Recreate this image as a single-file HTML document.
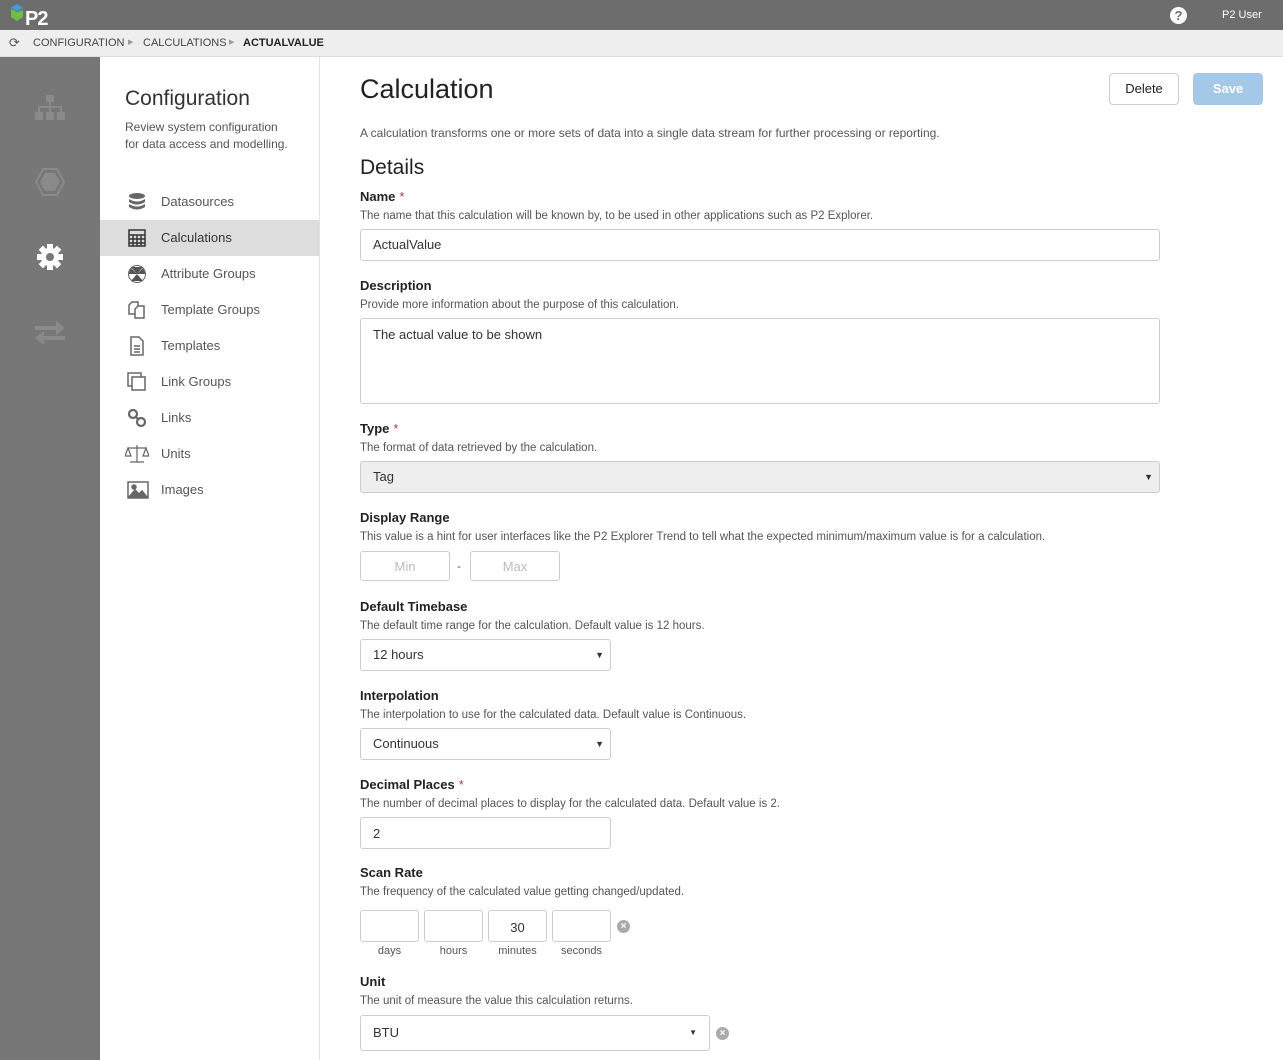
<!DOCTYPE html>
<html><head><meta charset="utf-8"><style>
*{box-sizing:border-box;margin:0;padding:0}
body{width:1283px;height:1060px;position:relative;overflow:hidden;font-family:"Liberation Sans",sans-serif;color:#333;background:#fff;font-size:12px}
.a{position:absolute;white-space:nowrap}
.top{left:0;top:0;width:1283px;height:30px;background:#6d6d6d}
.bc{left:0;top:30px;width:1283px;height:27px;background:#eee;border-bottom:1px solid #ddd;font-size:11px;color:#444;line-height:26px}
.rail{left:0;top:57px;width:100px;height:1003px;background:#777}
.nav{left:100px;top:57px;width:220px;height:1003px;background:#fff;border-right:1px solid #e2e2e2}
.ni{position:absolute;left:0;width:219px;height:36px;line-height:36px;font-size:13px;color:#555;padding-left:61px}
.ni svg{position:absolute;left:27px;top:8px}
.lbl{font-weight:bold;font-size:13px;color:#222;line-height:16px}
.lbl i{font-style:normal;color:#a0405a;font-weight:normal;margin-left:4px}
.hint{font-size:11.5px;color:#555;line-height:14px}
.in{position:absolute;border:1px solid #ccc;border-radius:3px;background:#fff;font-size:13px;color:#333;padding-left:12px;line-height:30px}
.car{position:absolute;right:6px;top:0;font-size:9px;color:#333}
.x{position:absolute;width:13px;height:13px;border-radius:50%;background:#aaa;color:#fff;font-size:10px;line-height:13px;text-align:center;font-weight:bold}
.sl{font-size:11px;color:#555;text-align:center;width:59px}
</style></head><body>
<div class="a top"></div>
<svg class="a" style="left:9px;top:3px" width="44" height="24" viewBox="0 0 44 24">
<polygon points="2,5 8,1 14,5 8,8" fill="#3b9fd8"/><polygon points="2,6 8,9 14,7 14,14 8,18 2,14" fill="#6cbe45"/>
<text x="16" y="22" font-family="Liberation Sans" font-weight="bold" font-size="20" fill="#fff" letter-spacing="-1">P2</text></svg>
<div class="a" style="left:1170px;top:7px;width:17px;height:17px;border-radius:50%;background:#fff;color:#6d6d6d;font-weight:bold;font-size:13px;text-align:center;line-height:17px">?</div>
<div class="a" style="left:1222px;top:9px;font-size:11px;color:#fff">P2 User</div>
<div class="a bc"><span style="position:absolute;left:9px;font-size:13px;color:#555">⟳</span><span style="position:absolute;left:33px">CONFIGURATION</span><span style="position:absolute;left:128px;font-size:7px;color:#999">▶</span><span style="position:absolute;left:143px">CALCULATIONS</span><span style="position:absolute;left:229px;font-size:7px;color:#999">▶</span><span style="position:absolute;left:243px;font-weight:bold;color:#222">ACTUALVALUE</span></div>
<div class="a rail"></div>
<svg class="a" style="left:34px;top:94px" width="32" height="28" viewBox="0 0 32 28" fill="#8a8a8a"><rect x="12" y="1" width="8" height="7"/><rect x="15" y="8" width="2" height="5"/><rect x="4" y="12" width="24" height="2"/><rect x="4" y="12" width="2" height="6"/><rect x="26" y="12" width="2" height="6"/><rect x="15" y="12" width="2" height="6"/><rect x="1" y="18" width="8" height="8"/><rect x="12" y="18" width="8" height="8"/><rect x="23" y="18" width="8" height="8"/></svg>
<svg class="a" style="left:34px;top:166px" width="32" height="32" viewBox="0 0 32 32"><polygon points="9,3 23,3 30,16 23,29 9,29 2,16" fill="none" stroke="#8a8a8a" stroke-width="2"/><polygon points="11,7 21,7 26,16 21,25 11,25 6,16" fill="#8a8a8a"/></svg>
<svg class="a" style="left:36px;top:243px" width="28" height="28" viewBox="0 0 28 28"><g fill="#fff"><circle cx="14" cy="14" r="9"/><rect x="11" y="1" width="6" height="26"/><rect x="1" y="11" width="26" height="6"/><rect x="11" y="1" width="6" height="26" transform="rotate(45 14 14)"/><rect x="11" y="1" width="6" height="26" transform="rotate(-45 14 14)"/></g><circle cx="14" cy="14" r="4" fill="#777"/></svg>
<svg class="a" style="left:34px;top:320px" width="32" height="26" viewBox="0 0 32 26" fill="#8a8a8a"><rect x="1" y="6" width="24" height="4"/><polygon points="22,1 31,8 22,15"/><rect x="7" y="16" width="24" height="4"/><polygon points="10,11 1,18 10,25"/></svg>
<div class="a nav">
<div class="a" style="left:25px;top:30px;font-size:21px;color:#333">Configuration</div>
<div class="a" style="left:25px;top:62px;font-size:12px;color:#555;line-height:17px;white-space:normal;width:170px">Review system configuration for data access and modelling.</div>
<div class="ni" style="top:127px"><svg width="20" height="20" viewBox="0 0 20 20" fill="#666"><ellipse cx="10" cy="4" rx="8" ry="3"/><path d="M2 7q8 5 16 0v3q-8 5-16 0z"/><path d="M2 12q8 5 16 0v3q-8 5-16 0z"/></svg>Datasources</div>
<div class="ni" style="top:163px;background:#ddd;color:#333"><svg width="20" height="20" viewBox="0 0 20 20" fill="none" stroke="#333" stroke-width="1.5"><rect x="2" y="2" width="16" height="16"/><path d="M2 7h16M2 11h16M2 15h16M6 7v11M10 7v11M14 7v11"/></svg>Calculations</div>
<div class="ni" style="top:199px"><svg width="20" height="20" viewBox="0 0 20 20"><circle cx="10" cy="10" r="8.5" fill="none" stroke="#666"/><path d="M10 10L4 3h12zM10 10L4 17h12zM10 10L1.5 10 4 4zM10 10l8.5 0-2.5-6" fill="#555"/></svg>Attribute Groups</div>
<div class="ni" style="top:235px"><svg width="20" height="20" viewBox="0 0 20 20" fill="#fff" stroke="#666" stroke-width="1.5"><path d="M2 5l3-3h6v12H2z"/><path d="M8 9l3-3h6v12H8z"/></svg>Template Groups</div>
<div class="ni" style="top:271px"><svg width="20" height="20" viewBox="0 0 20 20" fill="none" stroke="#666" stroke-width="1.5"><path d="M4 1h8l4 4v14H4z"/><path d="M7 10h6M7 13h6M7 16h6"/></svg>Templates</div>
<div class="ni" style="top:307px"><svg width="20" height="20" viewBox="0 0 20 20" fill="#fff" stroke="#666" stroke-width="1.5"><rect x="1" y="1" width="13" height="13"/><rect x="5" y="5" width="13" height="13"/></svg>Link Groups</div>
<div class="ni" style="top:343px"><svg width="20" height="20" viewBox="0 0 20 20" fill="none" stroke="#666" stroke-width="2.2"><circle cx="6" cy="6" r="4"/><circle cx="14" cy="14" r="4"/><path d="M8 8l4 4"/></svg>Links</div>
<div class="ni" style="top:379px"><svg width="24" height="20" viewBox="0 0 24 20" fill="none" stroke="#666" stroke-width="1.2" style="left:25px"><path d="M12 1v17M5 18h14M3 4h18M3 4l-3 8h6zM21 4l-3 8h6z"/></svg>Units</div>
<div class="ni" style="top:415px"><svg width="22" height="20" viewBox="0 0 22 20" fill="none" stroke="#666" stroke-width="1.5"><rect x="1" y="2" width="20" height="16"/><path d="M2 17l6-7 4 4 3-3 5 6z" fill="#666"/><circle cx="7" cy="7" r="2" fill="#666"/></svg>Images</div>
</div>
<div class="a" style="left:360px;top:74px;font-size:27px;color:#222">Calculation</div>
<div class="a" style="left:1109px;top:73px;width:70px;height:32px;border:1px solid #ccc;border-radius:4px;font-size:13px;color:#222;text-align:center;line-height:30px">Delete</div>
<div class="a" style="left:1193px;top:73px;width:70px;height:32px;background:#a3c8e8;border-radius:4px;font-size:13px;color:#fff;text-align:center;line-height:32px;font-weight:bold">Save</div>
<div class="a hint" style="left:360px;top:126px;font-size:12px">A calculation transforms one or more sets of data into a single data stream for further processing or reporting.</div>
<div class="a" style="left:360px;top:156px;font-size:21px;color:#222">Details</div>

<div class="a lbl" style="left:360px;top:189px">Name<i>*</i></div>
<div class="a hint" style="left:360px;top:209px">The name that this calculation will be known by, to be used in other applications such as P2 Explorer.</div>
<div class="in" style="left:360px;top:229px;width:800px;height:32px">ActualValue</div>

<div class="a lbl" style="left:360px;top:278px">Description</div>
<div class="a hint" style="left:360px;top:298px">Provide more information about the purpose of this calculation.</div>
<div class="in" style="left:360px;top:318px;width:800px;height:86px;line-height:32px">The actual value to be shown</div>

<div class="a lbl" style="left:360px;top:421px">Type<i>*</i></div>
<div class="a hint" style="left:360px;top:441px">The format of data retrieved by the calculation.</div>
<div class="in" style="left:360px;top:461px;width:800px;height:32px;background:#eee">Tag<span class="car">▼</span></div>

<div class="a lbl" style="left:360px;top:510px">Display Range</div>
<div class="a hint" style="left:360px;top:530px">This value is a hint for user interfaces like the P2 Explorer Trend to tell what the expected minimum/maximum value is for a calculation.</div>
<div class="in" style="left:360px;top:551px;width:90px;height:30px;line-height:30px;color:#bbb;text-align:center;padding:0">Min</div>
<div class="a" style="left:457px;top:559px;color:#555">-</div>
<div class="in" style="left:470px;top:551px;width:90px;height:30px;line-height:30px;color:#bbb;text-align:center;padding:0">Max</div>

<div class="a lbl" style="left:360px;top:599px">Default Timebase</div>
<div class="a hint" style="left:360px;top:619px">The default time range for the calculation. Default value is 12 hours.</div>
<div class="in" style="left:360px;top:639px;width:251px;height:32px">12 hours<span class="car">▼</span></div>

<div class="a lbl" style="left:360px;top:688px">Interpolation</div>
<div class="a hint" style="left:360px;top:708px">The interpolation to use for the calculated data. Default value is Continuous.</div>
<div class="in" style="left:360px;top:728px;width:251px;height:32px">Continuous<span class="car">▼</span></div>

<div class="a lbl" style="left:360px;top:777px">Decimal Places<i>*</i></div>
<div class="a hint" style="left:360px;top:797px">The number of decimal places to display for the calculated data. Default value is 2.</div>
<div class="in" style="left:360px;top:817px;width:251px;height:32px;line-height:32px">2</div>

<div class="a lbl" style="left:360px;top:865px">Scan Rate</div>
<div class="a hint" style="left:360px;top:885px">The frequency of the calculated value getting changed/updated.</div>
<div class="in" style="left:360px;top:910px;width:59px;height:32px"></div>
<div class="in" style="left:424px;top:910px;width:59px;height:32px"></div>
<div class="in" style="left:488px;top:910px;width:59px;height:32px;padding:0;text-align:center;line-height:33px">30</div>
<div class="in" style="left:552px;top:910px;width:59px;height:32px"></div>
<div class="x" style="left:617px;top:920px">×</div>
<div class="a sl" style="left:360px;top:945px">days</div>
<div class="a sl" style="left:424px;top:945px">hours</div>
<div class="a sl" style="left:488px;top:945px">minutes</div>
<div class="a sl" style="left:552px;top:945px">seconds</div>

<div class="a lbl" style="left:360px;top:974px">Unit</div>
<div class="a hint" style="left:360px;top:994px">The unit of measure the value this calculation returns.</div>
<div class="in" style="left:360px;top:1015px;width:350px;height:36px;line-height:34px">BTU<span class="car" style="right:12px;font-size:8px">▼</span></div>
<div class="x" style="left:716px;top:1027px">×</div>
</body></html>
